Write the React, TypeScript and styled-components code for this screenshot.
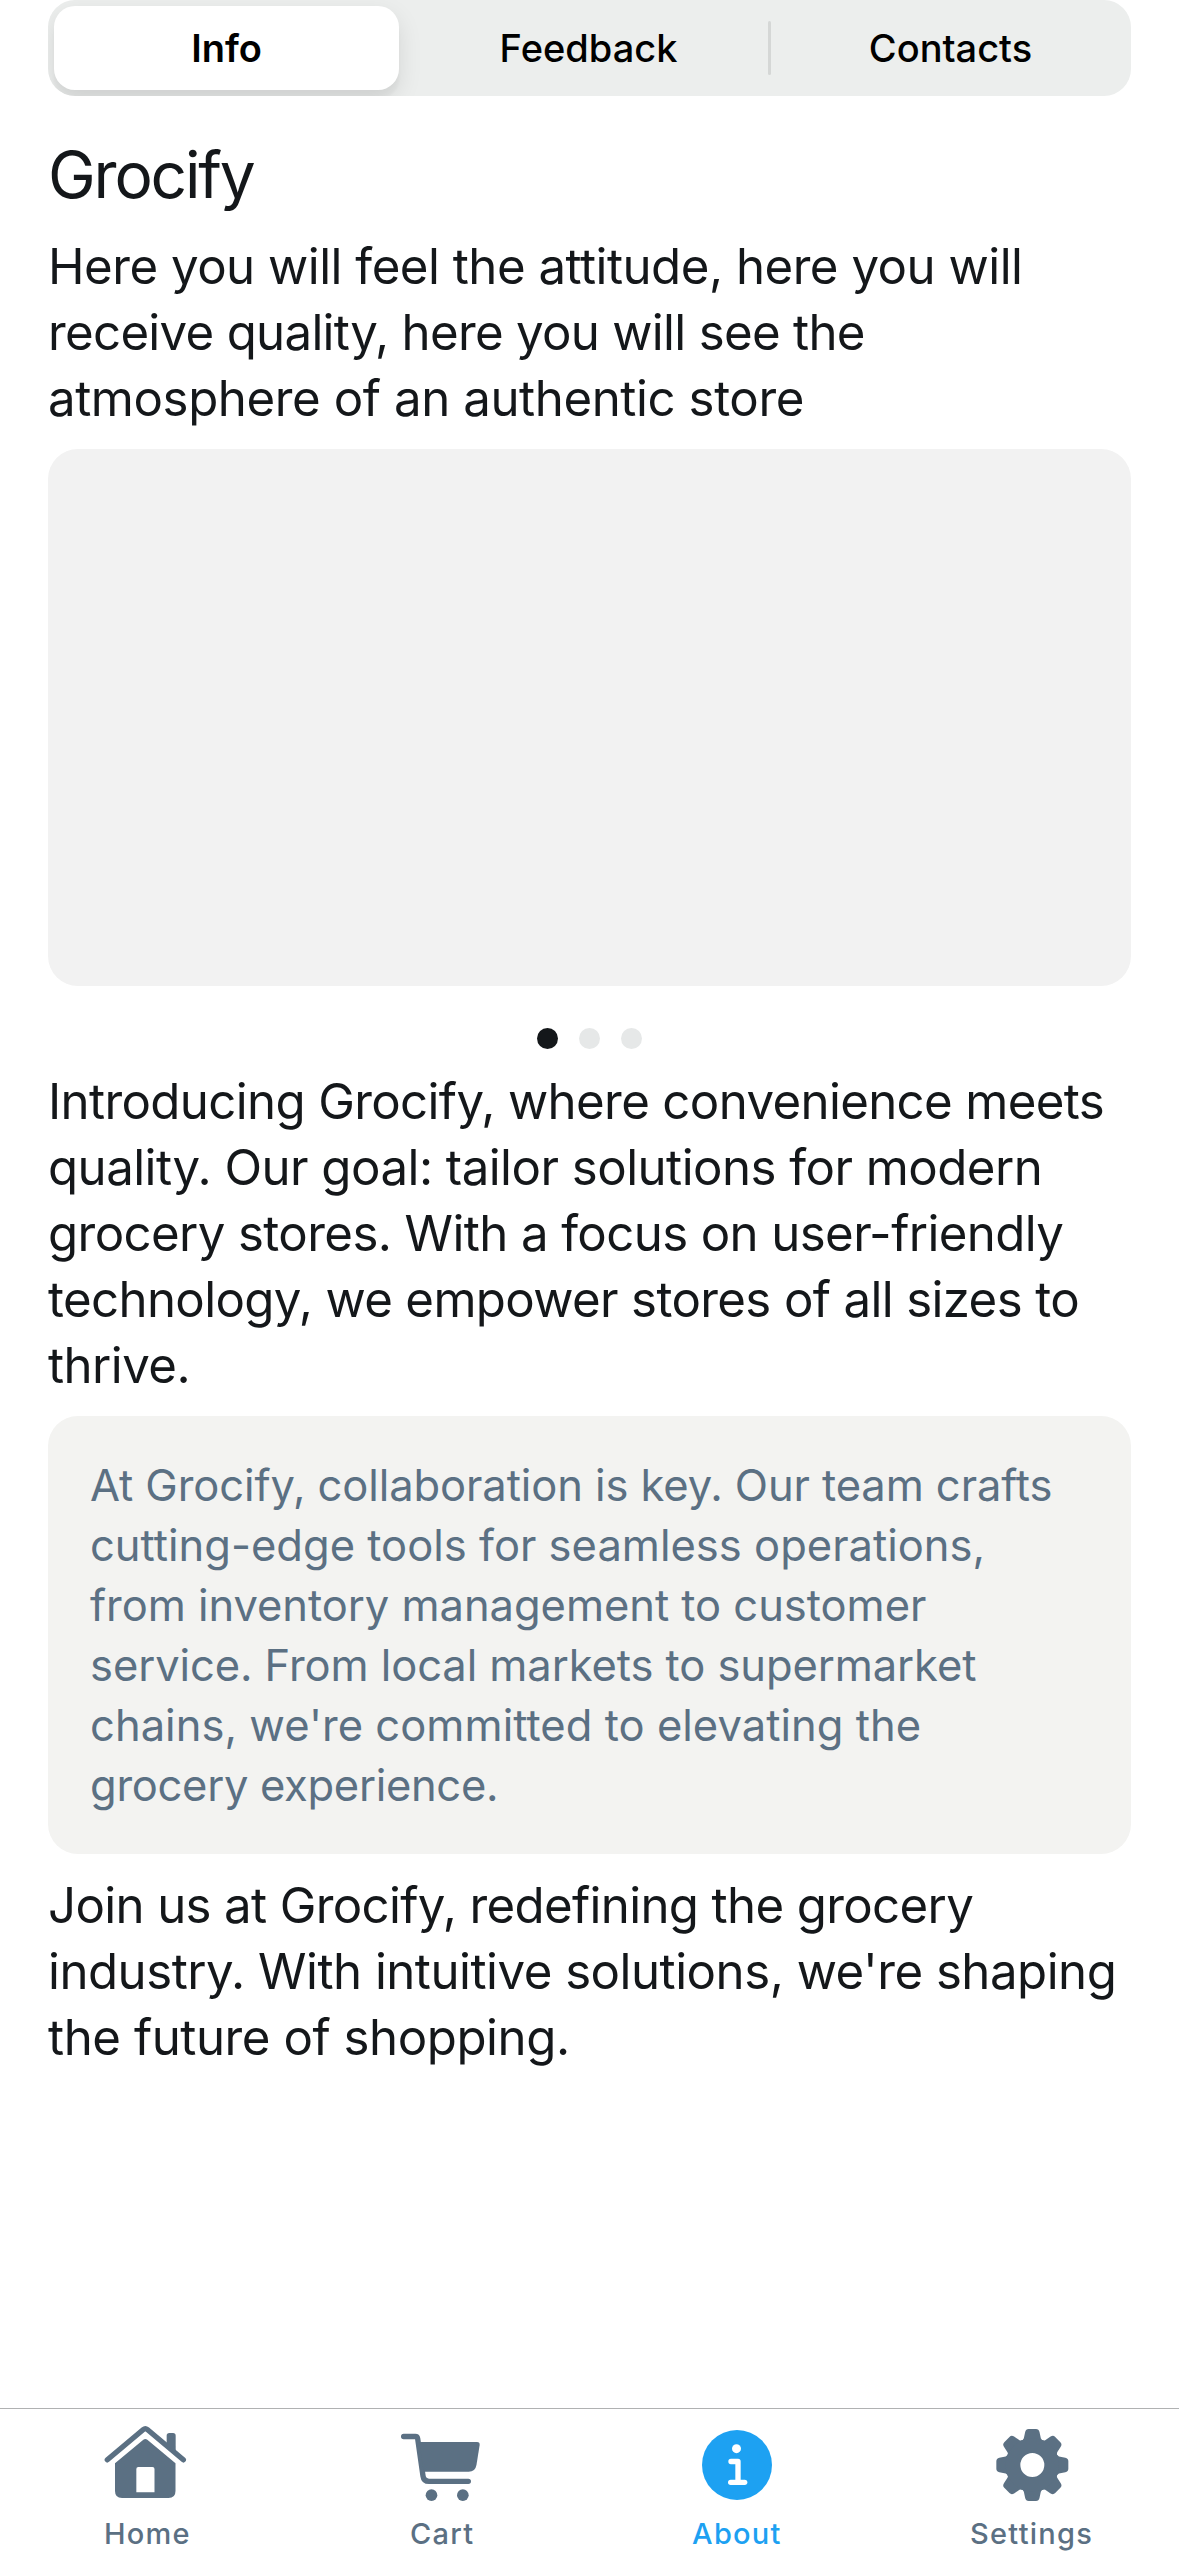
import React from "react";
import styled, { createGlobalStyle } from "styled-components";

const ink = "#14171a";
const slate = "#5b7083";
const accent = "#1da1f2";

const GlobalStyle = createGlobalStyle`
  * { box-sizing: border-box; }
  body {
    margin: 0;
    background: #fff;
    color: ${ink};
    font-family: Inter, "Liberation Sans", sans-serif;
  }
`;

const Screen = styled.div`
  display: flex;
  flex-direction: column;
  width: 1179px;
  height: 2556px;
  background: #fff;
  overflow: hidden;
`;

const Content = styled.main`
  flex: 1;
  display: flex;
  flex-direction: column;
  padding: 0 48px;
`;

const SegmentedControl = styled.div`
  display: flex;
  align-items: center;
  height: 96px;
  padding: 0 8px 0 6px;
  border-radius: 27px;
  background: #eceeed;
  overflow: hidden;
`;

const Segment = styled.button<{ $selected?: boolean }>`
  flex: 1 1 0;
  height: 84px;
  padding: 0;
  border: 0;
  border-radius: 21px;
  background: ${(p) => (p.$selected ? "#fff" : "transparent")};
  box-shadow: ${(p) =>
    p.$selected ? "0 9px 24px rgba(0,0,0,0.1), 0 9px 3px rgba(0,0,0,0.03)" : "none"};
  color: #000;
  font: ${(p) => (p.$selected ? 600 : 460)} 38px/84px Inter, "Liberation Sans", sans-serif;
  letter-spacing: ${(p) => (p.$selected ? "-0.1px" : "0")};
`;

const Divider = styled.span<{ $hidden?: boolean }>`
  width: 3px;
  height: 54px;
  margin: 0 7px;
  border-radius: 1.5px;
  background: ${(p) => (p.$hidden ? "transparent" : "#d5d7d6")};
`;

const Title = styled.h1`
  margin: 37px 0 16px;
  font-size: 64px;
  font-weight: 400;
  line-height: 84px;
  letter-spacing: -2.2px;
`;

const Paragraph = styled.p`
  margin: 0;
  font-size: 49.2px;
  line-height: 66px;
`;

const Line = styled.span<{ $tracking?: number }>`
  display: block;
  white-space: nowrap;
  letter-spacing: ${(p) => p.$tracking ?? 0}px;
`;

const Slide = styled.div`
  height: 537px;
  margin-top: 18px;
  border-radius: 30px;
  background: #f2f2f2;
`;

const Pager = styled.div`
  display: flex;
  justify-content: center;
  gap: 21px;
  margin: 42px 0 19px;
`;

const Dot = styled.span<{ $active?: boolean }>`
  width: 21px;
  height: 21px;
  border-radius: 50%;
  background: ${(p) => (p.$active ? ink : "#e6e8e8")};
`;

const Card = styled.section`
  margin: 18px 0;
  padding: 39px 42px;
  border-radius: 30px;
  background: #f3f3f1;
  color: ${slate};
  font-size: 43.5px;
  line-height: 60px;
`;

const TabBar = styled.nav`
  display: flex;
  height: 148px;
  border-top: 1px solid #b0b1b2;
`;

const Tab = styled.a<{ $active?: boolean }>`
  flex: 1 1 0;
  display: flex;
  flex-direction: column;
  align-items: center;
  padding-top: 15px;
  color: ${(p) => (p.$active ? accent : slate)};
`;

const TabIcon = styled.svg`
  width: 86px;
  height: 78px;
`;

const TabLabel = styled.span`
  margin-top: 14px;
  font-size: 29px;
  font-weight: 500;
  line-height: 36px;
  letter-spacing: 1.25px;
`;

type TextLine = [text: string, tracking: number];

const intro: TextLine[] = [
  ["Here you will feel the attitude, here you will", -0.5],
  ["receive quality, here you will see the", -0.7],
  ["atmosphere of an authentic store", -0.42],
];

const about: TextLine[] = [
  ["Introducing Grocify, where convenience meets", -0.64],
  ["quality. Our goal: tailor solutions for modern", -0.53],
  ["grocery stores. With a focus on user-friendly", -0.61],
  ["technology, we empower stores of all sizes to", -0.64],
  ["thrive.", -0.55],
];

const team: TextLine[] = [
  ["At Grocify, collaboration is key. Our team crafts", -0.09],
  ["cutting-edge tools for seamless operations,", 0.01],
  ["from inventory management to customer", -0.04],
  ["service. From local markets to supermarket", -0.08],
  ["chains, we're committed to elevating the", 0.04],
  ["grocery experience.", -0.3],
];

const closing: TextLine[] = [
  ["Join us at Grocify, redefining the grocery", -0.65],
  ["industry. With intuitive solutions, we're shaping", -0.5],
  ["the future of shopping.", -0.45],
];

const Lines = ({ lines }: { lines: TextLine[] }) => (
  <>
    {lines.map(([text, tracking]) => (
      <Line key={text} $tracking={tracking}>
        {text}
      </Line>
    ))}
  </>
);

const HomeIcon = () => (
  <TabIcon viewBox="313 102 258 234" fill="currentColor">
    <path
      d="M323 209.5 L431 118.5 Q437 113.5 443 118.5 L551 209.5"
      fill="none"
      stroke="currentColor"
      strokeWidth="16"
      strokeLinecap="round"
      strokeLinejoin="round"
    />
    <path d="M501 168 V137 Q501 129 509 129 H520 Q528 129 528 137 V190 Z" />
    <path
      fillRule="evenodd"
      d="M431 149 Q437 144.500 443 149 L527.500 220 V303 Q527.500 324 506.500 324 H367 Q346 324 346 303 V220 Z M410 306.500 H464.500 V237 Q464.500 231 458.500 231 H416 Q410 231 410 237 Z"
    />
  </TabIcon>
);

const CartIcon = () => (
  <TabIcon viewBox="297 102 258 234" fill="currentColor">
    <path
      d="M311 139.500 H346 Q352 139.500 353 146 L369 258 Q371 274 387 274 H505"
      fill="none"
      stroke="currentColor"
      strokeWidth="16"
      strokeLinecap="round"
      strokeLinejoin="round"
    />
    <path d="M358 156 H531 Q540 156 539 165 L529.500 224 Q526 245 506 245 H371 Z" />
    <circle cx="394.500" cy="315.500" r="17.500" />
    <circle cx="488.500" cy="315.500" r="17.500" />
  </TabIcon>
);

const InfoIcon = () => (
  <TabIcon viewBox="282 102 258 234" fill="currentColor">
    <circle cx="411" cy="225" r="105" />
    <circle cx="409.500" cy="176" r="13.500" fill="#fff" />
    <path
      d="M393 214.500 H414 V277"
      fill="none"
      stroke="#fff"
      strokeWidth="16"
      strokeLinecap="round"
      strokeLinejoin="round"
    />
    <path d="M392 277 H434" stroke="#fff" strokeWidth="16" strokeLinecap="round" />
  </TabIcon>
);

const GearIcon = () => (
  <TabIcon viewBox="329 102 258 234" fill="currentColor">
    {[0, 45, 90, 135, 180, 225, 270, 315].map((angle) => (
      <path
        key={angle}
        transform={`translate(459 225) rotate(${angle})`}
        d="M-36 -72 Q-27 -74 -25.500 -80 L-21.500 -99 Q-19.500 -108 -11 -108 H11 Q19.500 -108 21.500 -99 L25.500 -80 Q27 -74 36 -72 Z"
      />
    ))}
    <circle cx="459" cy="225" r="58" fill="none" stroke="currentColor" strokeWidth="44" />
  </TabIcon>
);

export default function App() {
  return (
    <>
      <GlobalStyle />
      <Screen>
        <Content>
          <SegmentedControl>
            <Segment $selected>Info</Segment>
            <Divider $hidden />
            <Segment>Feedback</Segment>
            <Divider />
            <Segment>Contacts</Segment>
          </SegmentedControl>
          <Title>Grocify</Title>
          <Paragraph>
            <Lines lines={intro} />
          </Paragraph>
          <Slide />
          <Pager>
            <Dot $active />
            <Dot />
            <Dot />
          </Pager>
          <Paragraph>
            <Lines lines={about} />
          </Paragraph>
          <Card>
            <Lines lines={team} />
          </Card>
          <Paragraph>
            <Lines lines={closing} />
          </Paragraph>
        </Content>
        <TabBar>
          <Tab>
            <HomeIcon />
            <TabLabel>Home</TabLabel>
          </Tab>
          <Tab>
            <CartIcon />
            <TabLabel>Cart</TabLabel>
          </Tab>
          <Tab $active>
            <InfoIcon />
            <TabLabel>About</TabLabel>
          </Tab>
          <Tab>
            <GearIcon />
            <TabLabel>Settings</TabLabel>
          </Tab>
        </TabBar>
      </Screen>
    </>
  );
}
